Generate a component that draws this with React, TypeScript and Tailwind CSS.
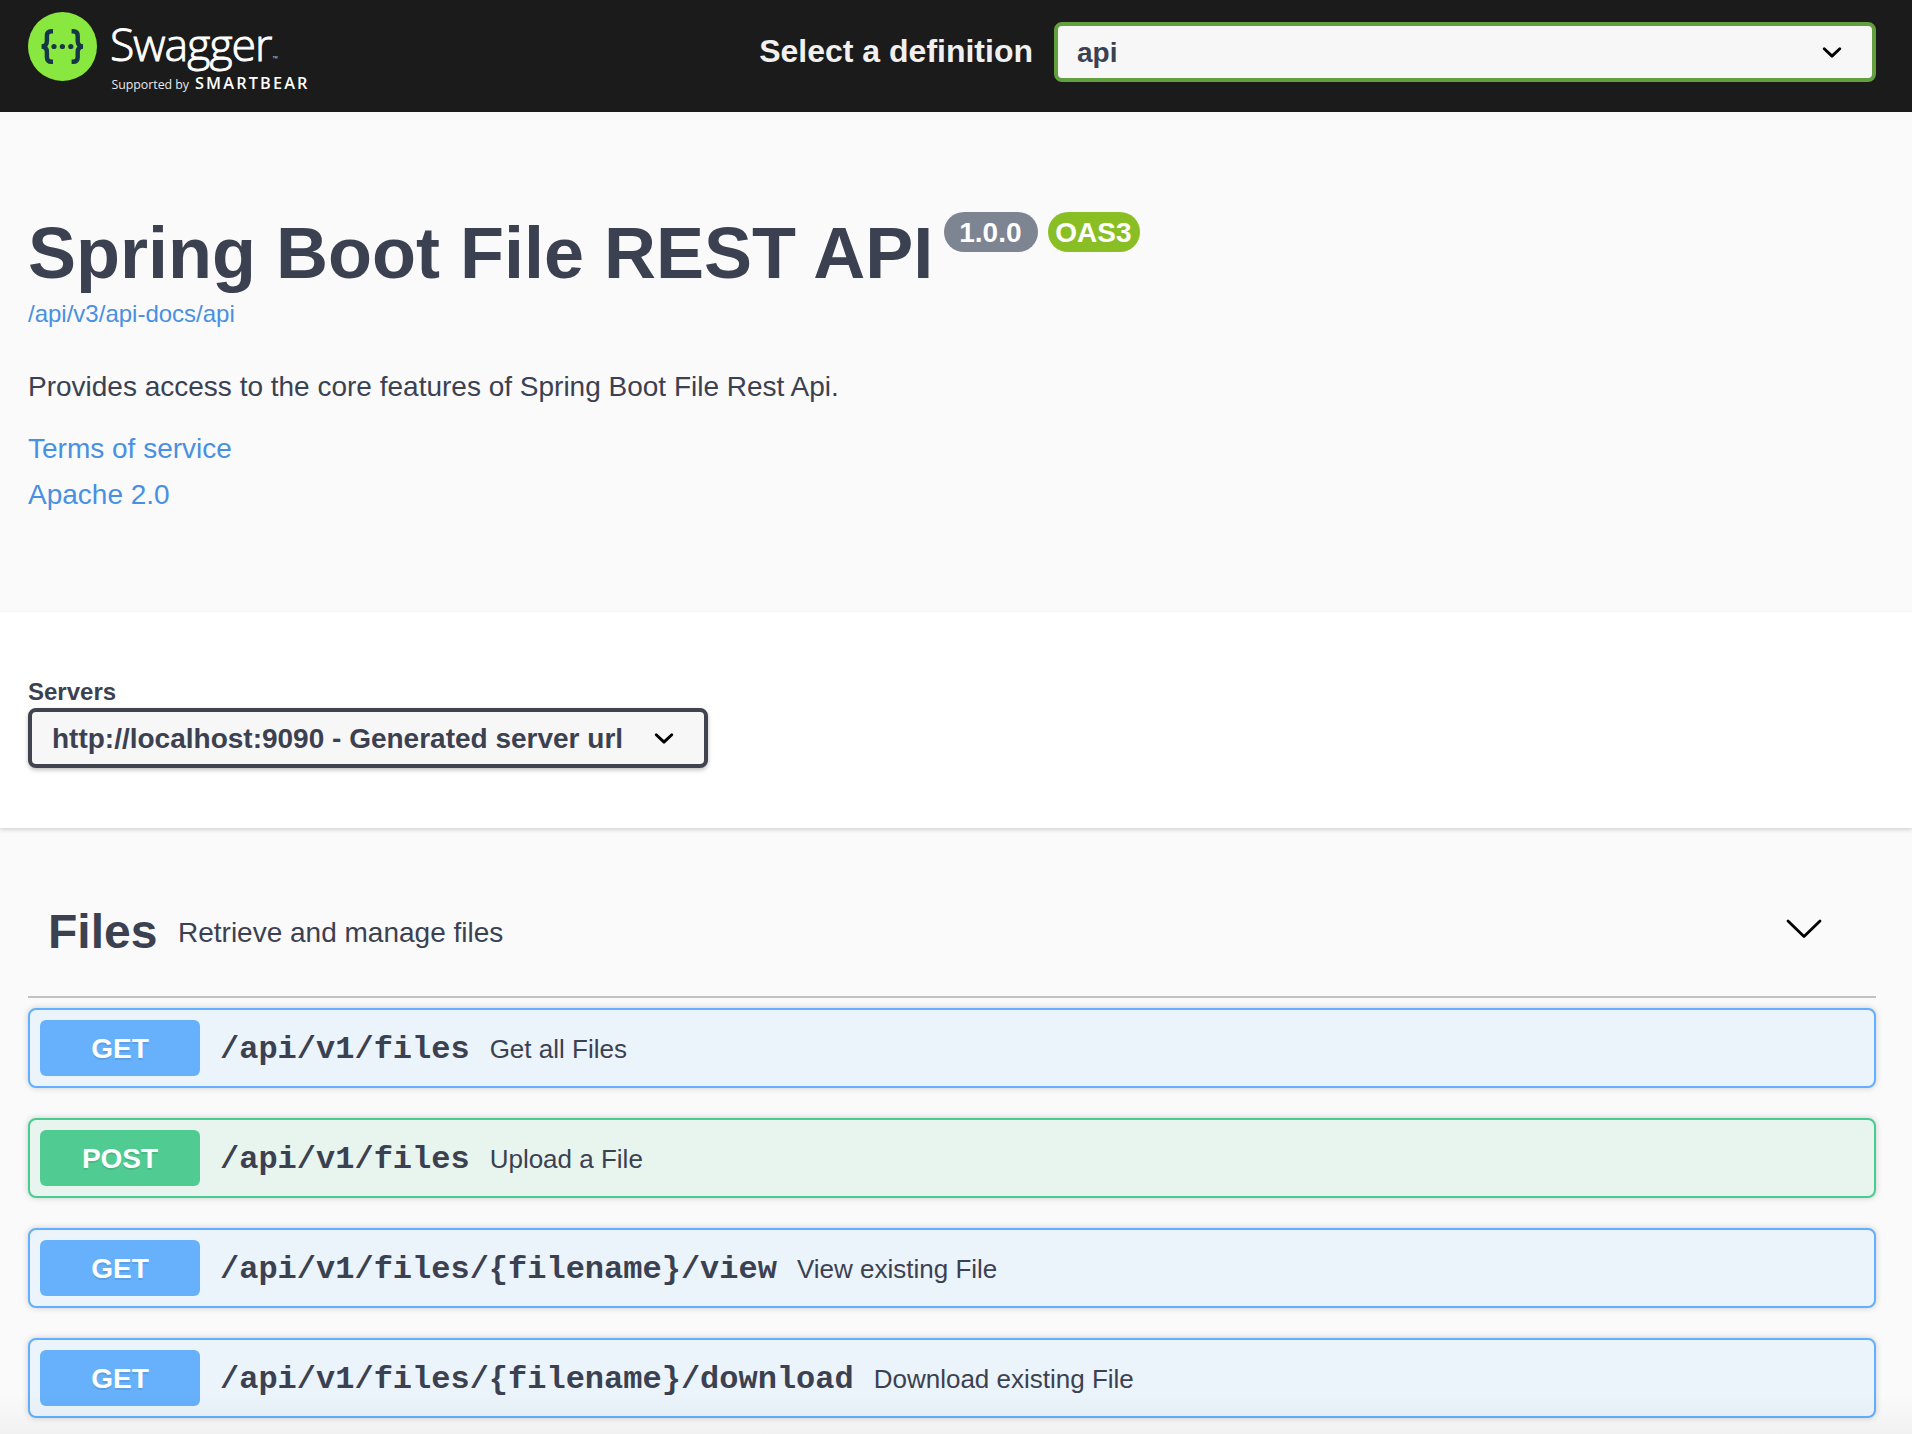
import React from "react";

type Method = "GET" | "POST";

const operations: { method: Method; path: string; summary: string }[] = [
  { method: "GET", path: "/api/v1/files", summary: "Get all Files" },
  { method: "POST", path: "/api/v1/files", summary: "Upload a File" },
  { method: "GET", path: "/api/v1/files/{filename}/view", summary: "View existing File" },
  { method: "GET", path: "/api/v1/files/{filename}/download", summary: "Download existing File" },
];

const blockStyles: Record<Method, string> = {
  GET: "border-[#61affe] bg-[#ebf3fb]",
  POST: "border-[#49cc90] bg-[#e8f5ee]",
};

const badgeStyles: Record<Method, string> = {
  GET: "bg-[#66b0fc]",
  POST: "bg-[#50cb92]",
};

function Chevron({ className }: { className: string }) {
  return (
    <svg className={className} viewBox="0 0 20 20" fill="#000">
      <path d="M13.418 7.859a.695.695 0 0 1 .978 0 .68.68 0 0 1 0 .969l-3.908 3.83a.697.697 0 0 1-.979 0l-3.908-3.83a.68.68 0 0 1 0-.969.695.695 0 0 1 .978 0L10 11z" />
    </svg>
  );
}

function Logo() {
  return (
    <div className="flex h-[84px] gap-[14px]">
      <svg className="h-[69px] w-[69px] shrink-0" viewBox="0 0 69 69">
        <circle cx="34.5" cy="34.5" r="34.5" fill="#89e83f" />
        <g fill="none" stroke="#173647" strokeWidth="4.4">
          <path d="M25 19.2 h-1.5 q-4.6 0 -4.6 4.6 v5.2 q0 5.2 -5.2 5.5 q5.2 .3 5.2 5.5 v5.2 q0 4.6 4.6 4.6 h1.5" />
          <path d="M43.6 19.2 h1.5 q4.6 0 4.6 4.6 v5.2 q0 5.2 5.2 5.5 q-5.2 .3 -5.2 5.5 v5.2 q0 4.6 -4.6 4.6 h-1.5" />
        </g>
        <g fill="#173647">
          <circle cx="26" cy="34.5" r="2.6" />
          <circle cx="34.4" cy="34.5" r="2.6" />
          <circle cx="42.8" cy="34.5" r="2.6" />
        </g>
      </svg>
      <svg className="h-[84px] w-[200px]" viewBox="0 0 200 84" fill="#fff">
        <text
          x="-1"
          y="48.8"
          textLength="161.5"
          lengthAdjust="spacingAndGlyphs"
          fontFamily="Open Sans"
          fontWeight="300"
          fontSize="45"
          letterSpacing="-1"
          stroke="#fff"
          strokeWidth="0.9"
        >
          Swagger
        </text>
        <text x="161.5" y="48.8" fontFamily="Open Sans" fontSize="7" fill="#ccc">
          ™
        </text>
        <text x="0.5" y="76.8" textLength="77.5" fontFamily="Open Sans" fontSize="12.4" fill="#e8e8e8">
          Supported by
        </text>
        <text x="84" y="76.5" textLength="112.5" fontFamily="Open Sans" fontWeight="600" fontSize="16.3">
          SMARTBEAR
        </text>
      </svg>
    </div>
  );
}

export default function App() {
  return (
    <div className="relative h-[1434px] w-[1912px] overflow-hidden bg-[#fafafa] font-['Liberation_Sans',sans-serif] text-[#3b4151]">
      <header className="flex h-[112px] items-start justify-between bg-[#1b1b1b] pr-9 pl-7">
        <div className="pt-3">
          <Logo />
        </div>
        <div className="flex items-center pt-[22px]">
          <span className="mr-[21px] pb-[2px] text-[32px] leading-[36px] font-bold text-[#f0f0f0]">Select a definition</span>
          <div className="flex h-[60px] w-[822px] items-center justify-between rounded-[8px] border-4 border-[#62a03f] bg-[#f7f7f7] pr-[20px] pl-[19px]">
            <span className="pt-px text-[28px] leading-none font-bold">api</span>
            <Chevron className="h-10 w-10" />
          </div>
        </div>
      </header>

      <section className="flex h-[500px] flex-col items-start px-7 pt-[98px]">
        <div className="flex items-start">
          <h1 className="pt-px text-[72px] leading-[84px] font-bold">Spring Boot File REST API</h1>
          <div className="ml-[11px] flex gap-[10px] pt-[2px] text-[28px] leading-[41px] font-bold text-white">
            <span className="h-10 w-[94px] rounded-full bg-[#7d8492] pr-[2px] text-center">1.0.0</span>
            <span className="h-10 w-[92px] rounded-full bg-[#89bf24] pr-[2px] text-center">OAS3</span>
          </div>
        </div>
        <a className="mt-[5px] text-[24px] leading-[28px] text-[#4990e2]">/api/v3/api-docs/api</a>
        <p className="mt-[41px] text-[28px] leading-[36px]">Provides access to the core features of Spring Boot File Rest Api.</p>
        <a className="mt-[26px] text-[28px] leading-[36px] text-[#4990e2]">Terms of service</a>
        <a className="mt-[10px] text-[28px] leading-[36px] text-[#4990e2]">Apache 2.0</a>
      </section>

      <section className="h-[216px] bg-white px-7 pt-[64px] shadow-[0_2px_4px_0_rgba(0,0,0,0.15)]">
        <div className="h-8 pt-[2px] text-[24px] leading-[28px] font-bold">Servers</div>
        <div className="flex h-[60px] w-[680px] items-center justify-between rounded-[8px] border-4 border-[#41444e] bg-[#f7f7f7] pr-[20px] pl-5 shadow-[0_2px_4px_0_rgba(0,0,0,0.25)]">
          <span className="pt-px text-[28px] leading-none font-bold">http://localhost:9090 - Generated server url</span>
          <Chevron className="h-10 w-10" />
        </div>
      </section>

      <main className="pt-[68px] pr-9 pl-7">
        <div className="flex h-[102px] items-start justify-between border-b-2 border-[rgba(59,65,81,0.3)] pr-[54px] pl-5">
          <div className="flex items-start">
            <h2 className="w-[130px] pt-px text-[48px] leading-[70px] font-bold">Files</h2>
            <p className="pt-[2px] text-[28px] leading-[70px]">Retrieve and manage files</p>
          </div>
          <svg className="mt-[23px] h-[20px] w-[36px]" viewBox="0 0 36 20" fill="none" stroke="#000" strokeWidth="2.8" strokeLinecap="round" strokeLinejoin="round">
            <path d="M2 2 18 17.5 34 2" />
          </svg>
        </div>
        <div className="mt-[10px] flex flex-col gap-[30px]">
          {operations.map((op) => (
            <div
              key={op.path + op.method}
              className={`flex h-20 items-center rounded-[8px] border-2 px-[10px] shadow-[0_0_6px_rgba(0,0,0,0.19)] ${blockStyles[op.method]}`}
            >
              <span
                className={`h-14 w-40 rounded-[6px] text-center text-[28px] leading-[57px] font-bold text-white [text-shadow:0_2px_0_rgba(0,0,0,0.1)] ${badgeStyles[op.method]}`}
              >
                {op.method}
              </span>
              <div className="flex items-baseline pt-[3px] pl-5">
                <span className="font-['Liberation_Mono',monospace] text-[32px] leading-10 font-bold">{op.path}</span>
                <span className="pl-5 text-[26px]">{op.summary}</span>
              </div>
            </div>
          ))}
        </div>
      </main>
      <div className="pointer-events-none absolute inset-x-0 bottom-0 h-10 bg-gradient-to-t from-black/[0.035] to-transparent" />
    </div>
  );
}
